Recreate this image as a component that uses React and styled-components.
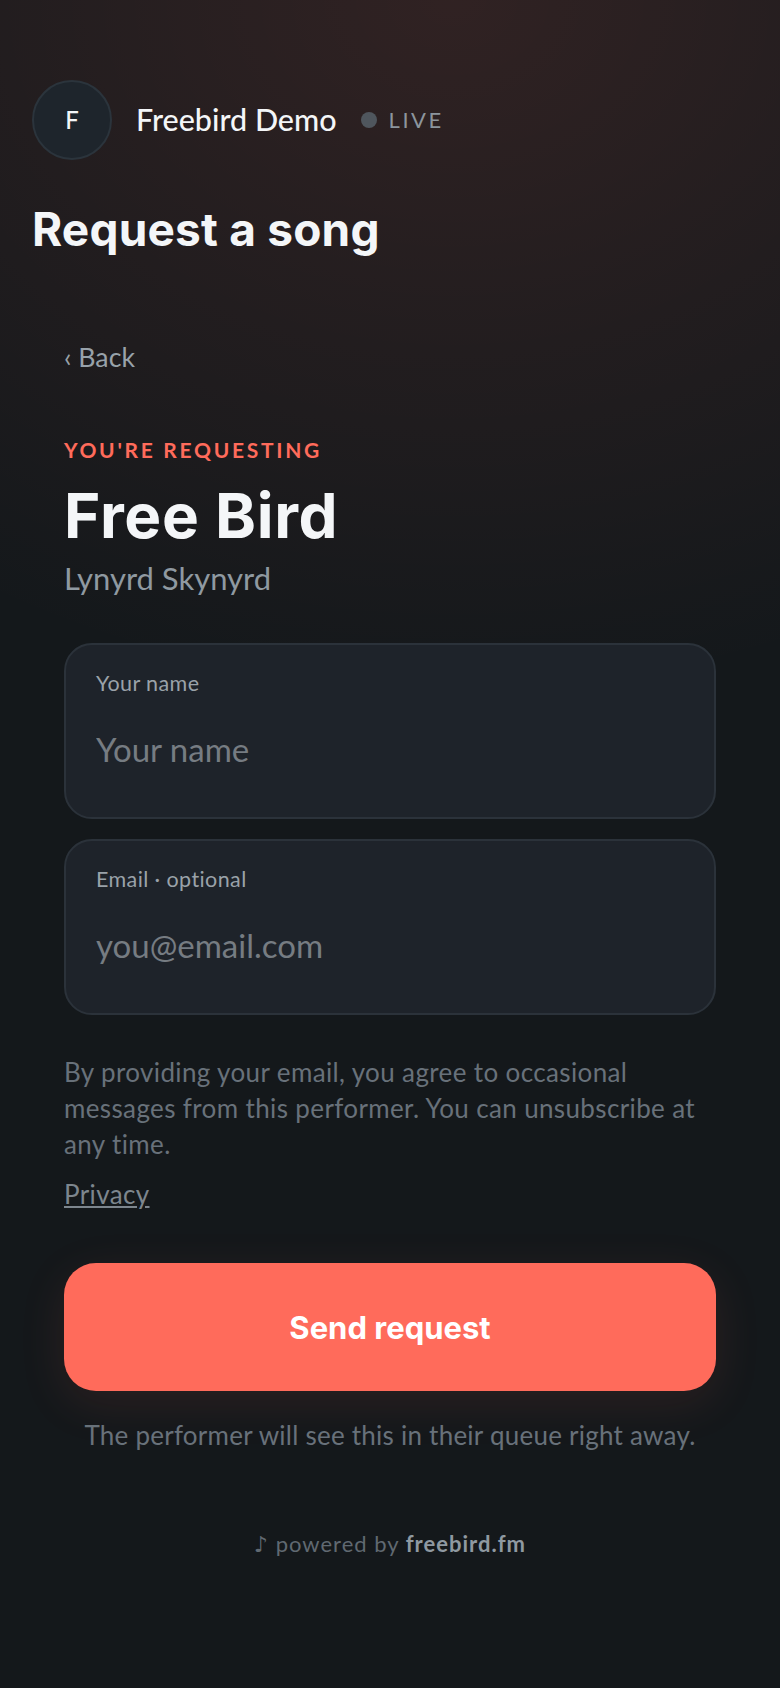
import React from "react";
import styled, { createGlobalStyle } from "styled-components";

const GlobalStyle = createGlobalStyle`
  html, body {
    margin: 0;
    padding: 0;
    background: #14181b;
  }

  * {
    box-sizing: border-box;
  }
`;

const Page = styled.div`
  min-height: 1688px;
  padding: 80px 32px 0;
  font-family: Lato, "Noto Sans", sans-serif;
  color: #f4f6f8;
  background:
    radial-gradient(ellipse 900px 700px at 58% 0, rgba(255, 107, 91, 0.12), rgba(255, 107, 91, 0) 100%),
    #14181b;
`;

const Header = styled.header`
  display: flex;
  align-items: center;
`;

const Avatar = styled.div`
  display: flex;
  align-items: center;
  justify-content: center;
  width: 80px;
  height: 80px;
  padding-bottom: 2px;
  border-radius: 50%;
  background: #1e252c;
  border: 2px solid #2b343c;
  font-size: 24px;
  font-weight: 500;
`;

const Name = styled.span`
  margin-left: 24px;
  padding-bottom: 2px;
  font-size: 30.5px;
  font-weight: 500;
  line-height: 36px;
`;

const LiveDot = styled.span`
  width: 16px;
  height: 16px;
  margin-left: 24px;
  border-radius: 50%;
  background: #4f565d;
`;

const LiveText = styled.span`
  margin-left: 12px;
  padding-bottom: 2px;
  font-size: 22px;
  letter-spacing: 2.5px;
  color: #8c959d;
`;

const Title = styled.h1`
  margin: 41px 0 0;
  font-family: Inter, sans-serif;
  font-size: 46px;
  line-height: 56px;
  font-weight: 700;
  letter-spacing: 0.2px;
`;

const Main = styled.main`
  padding: 82px 32px 0;
`;

const Back = styled.a`
  display: block;
  font-size: 26.7px;
  line-height: 36px;
  color: #98a2aa;
`;

const Eyebrow = styled.div`
  margin-top: 61px;
  font-size: 21px;
  line-height: 28px;
  font-weight: 700;
  letter-spacing: 2.7px;
  color: #ff6b5b;
`;

const Song = styled.h2`
  margin: 16px 0 0;
  font-family: Inter, sans-serif;
  font-size: 62px;
  line-height: 72px;
  font-weight: 700;
  letter-spacing: 0.7px;
`;

const Artist = styled.div`
  margin-top: 6px;
  font-size: 31px;
  line-height: 40px;
  color: #8f99a1;
`;

const Fields = styled.div`
  display: flex;
  flex-direction: column;
  gap: 20px;
  margin-top: 45px;
`;

const Field = styled.label`
  display: block;
  height: 176px;
  padding: 25px 30px;
  background: #1e232a;
  border: 2px solid #2b323a;
  border-radius: 28px;
`;

const FieldLabel = styled.span`
  display: block;
  font-size: 21.5px;
  line-height: 26px;
  letter-spacing: 0.4px;
  color: #9aa2a9;
`;

const Input = styled.input`
  display: block;
  width: 100%;
  margin-top: 33px;
  padding: 0;
  background: transparent;
  border: 0;
  outline: 0;
  font-family: inherit;
  font-size: 33px;
  line-height: 40px;
  color: #f4f6f8;

  &::placeholder {
    color: #767c82;
    opacity: 1;
  }
`;

const Consent = styled.p`
  margin: 39px 0 0;
  font-size: 26px;
  line-height: 36px;
  letter-spacing: 0.37px;
  color: #68717a;
`;

const Privacy = styled.a`
  display: inline-block;
  margin-top: 14px;
  font-size: 26px;
  line-height: 36px;
  letter-spacing: 0.37px;
  color: #7d868e;
  text-decoration: underline;
`;

const SendButton = styled.button`
  display: block;
  width: 100%;
  height: 128px;
  margin-top: 51px;
  border: 0;
  border-radius: 32px;
  background: #ff6b5b;
  box-shadow: 0 12px 48px rgba(255, 107, 91, 0.1);
  font-family: Inter, sans-serif;
  font-size: 31px;
  font-weight: 700;
  color: #fff;
`;

const Hint = styled.p`
  margin: 26px 0 0;
  text-align: center;
  font-size: 26px;
  line-height: 36px;
  letter-spacing: 0.24px;
  color: #68717a;
`;

const Footer = styled.footer`
  margin-top: 77px;
  text-align: center;
  font-size: 22px;
  line-height: 28px;
  letter-spacing: 1px;
  color: #606971;

  strong {
    font-weight: 700;
    color: #8f99a1;
  }
`;

const Note = styled.span`
  font-family: "DejaVu Sans", sans-serif;
`;

export default function App() {
  return (
    <Page>
      <GlobalStyle />
      <Header>
        <Avatar>F</Avatar>
        <Name>Freebird Demo</Name>
        <LiveDot />
        <LiveText>LIVE</LiveText>
      </Header>
      <Title>Request a song</Title>
      <Main>
        <Back>‹ Back</Back>
        <Eyebrow>YOU'RE REQUESTING</Eyebrow>
        <Song>Free Bird</Song>
        <Artist>Lynyrd Skynyrd</Artist>
        <Fields>
          <Field>
            <FieldLabel>Your name</FieldLabel>
            <Input placeholder="Your name" />
          </Field>
          <Field>
            <FieldLabel>Email · optional</FieldLabel>
            <Input placeholder="you@email.com" />
          </Field>
        </Fields>
        <Consent>
          By providing your email, you agree to occasional messages from this
          performer. You can unsubscribe at any time.
        </Consent>
        <Privacy>Privacy</Privacy>
        <SendButton>Send request</SendButton>
        <Hint>The performer will see this in their queue right away.</Hint>
        <Footer>
          <Note>♪</Note> powered by <strong>freebird.fm</strong>
        </Footer>
      </Main>
    </Page>
  );
}
